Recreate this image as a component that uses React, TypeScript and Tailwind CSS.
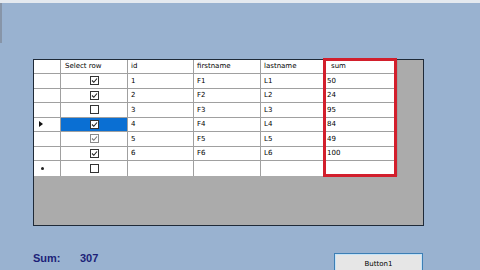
import React from 'react'

const rows = [
  { id: '1', first: 'F1', last: 'L1', sum: '50', checked: true },
  { id: '2', first: 'F2', last: 'L2', sum: '24', checked: true },
  { id: '3', first: 'F3', last: 'L3', sum: '95', checked: false },
  { id: '4', first: 'F4', last: 'L4', sum: '84', checked: true, current: true },
  { id: '5', first: 'F5', last: 'L5', sum: '49', checked: true, dim: true },
  { id: '6', first: 'F6', last: 'L6', sum: '100', checked: true },
]

function CheckBox({ checked, dim }: { checked: boolean; dim?: boolean }) {
  return (
    <div
      className={`w-[9px] h-[9px] border bg-white flex items-center justify-center ${
        dim ? 'border-[#8a8a8a]' : 'border-[#333]'
      }`}
    >
      {checked && (
        <svg width="7" height="7" viewBox="0 0 7 7">
          <path d="M1 3.5 L2.8 5.3 L6 1.5" stroke={dim ? '#777' : '#222'} strokeWidth="1.1" fill="none" />
        </svg>
      )}
    </div>
  )
}

const cell = 'h-full border-r border-[#a0a0a0] flex items-center pl-[3px]'

export default function App() {
  return (
    <div
      className="relative w-[480px] h-[270px] overflow-hidden bg-[#99b2d0] text-[7px] text-black"
      style={{ fontFamily: '"DejaVu Sans", "Liberation Sans", sans-serif' }}
    >
      <div className="h-[3px] bg-[#e4e9ef]" />
      <div className="absolute left-0 top-[3px] w-[2px] h-[40px] bg-[#8795a8]" />

      {/* grid */}
      <div className="ml-[33px] mt-[56px] w-[391px] h-[167px] border border-[#1f2a38] bg-[#ababab] flex flex-col">
        <div className="flex h-[14px] bg-white border-b border-[#a0a0a0] w-[364px]">
          <div className={`${cell} w-[27px]`} />
          <div className={`${cell} w-[67px] pl-[4px]`}>Select row</div>
          <div className={`${cell} w-[66px]`}>id</div>
          <div className={`${cell} w-[67px]`}>firstname</div>
          <div className={`${cell} w-[63px]`}>lastname</div>
          <div className={`${cell} w-[74px] pl-[7px]`}>sum</div>
        </div>
        {rows.map((r) => (
          <div key={r.id} className="flex h-[14.5px] bg-white border-b border-[#a0a0a0] w-[364px]">
            <div className={`${cell} w-[27px] pl-[5px]`}>
              {r.current && (
                <svg width="4" height="6" viewBox="0 0 4 6">
                  <path d="M0 0 L4 3 L0 6 Z" fill="#111" />
                </svg>
              )}
            </div>
            <div
              className={`h-full border-r border-[#a0a0a0] w-[67px] flex items-center justify-center ${
                r.current ? 'bg-[#0a6fd3]' : ''
              }`}
            >
              <CheckBox checked={r.checked} dim={r.dim} />
            </div>
            <div className={`${cell} w-[66px]`}>{r.id}</div>
            <div className={`${cell} w-[67px]`}>{r.first}</div>
            <div className={`${cell} w-[63px]`}>{r.last}</div>
            <div className={`${cell} w-[74px]`}>{r.sum}</div>
          </div>
        ))}
        <div className="flex h-[14.5px] bg-white w-[364px]">
          <div className={`${cell} w-[27px] pl-[7px]`}>
            <div className="w-[3px] h-[3px] rounded-full bg-[#222]" />
          </div>
          <div className="h-full border-r border-[#a0a0a0] w-[67px] flex items-center justify-center">
            <CheckBox checked={false} />
          </div>
          <div className={`${cell} w-[66px]`} />
          <div className={`${cell} w-[67px]`} />
          <div className={`${cell} w-[63px]`} />
          <div className={`${cell} w-[74px]`} />
        </div>
      </div>

      {/* highlight around sum column */}
      <div className="absolute left-[323px] top-[58px] w-[74px] h-[119px] border-[3px] border-[#d21f2c]" />

      {/* footer */}
      <div className="flex items-start mt-[27px]">
        <div
          className="ml-[33px] -mt-[3px] flex text-[11px] font-bold text-[#1c1f78]"
          style={{ fontFamily: '"Liberation Sans", Arial, sans-serif' }}
        >
          <span className="w-[47px]">Sum:</span>
          <span>307</span>
        </div>
        <div className="ml-auto mr-[57px] w-[89px] h-[24px] border border-[#3d7fb5] bg-[#e6e6e6] shadow-[inset_0_0_0_1px_#c6e3f7] flex justify-center pt-[5px]">
          <span className="text-[7px]">Button1</span>
        </div>
      </div>
    </div>
  )
}
